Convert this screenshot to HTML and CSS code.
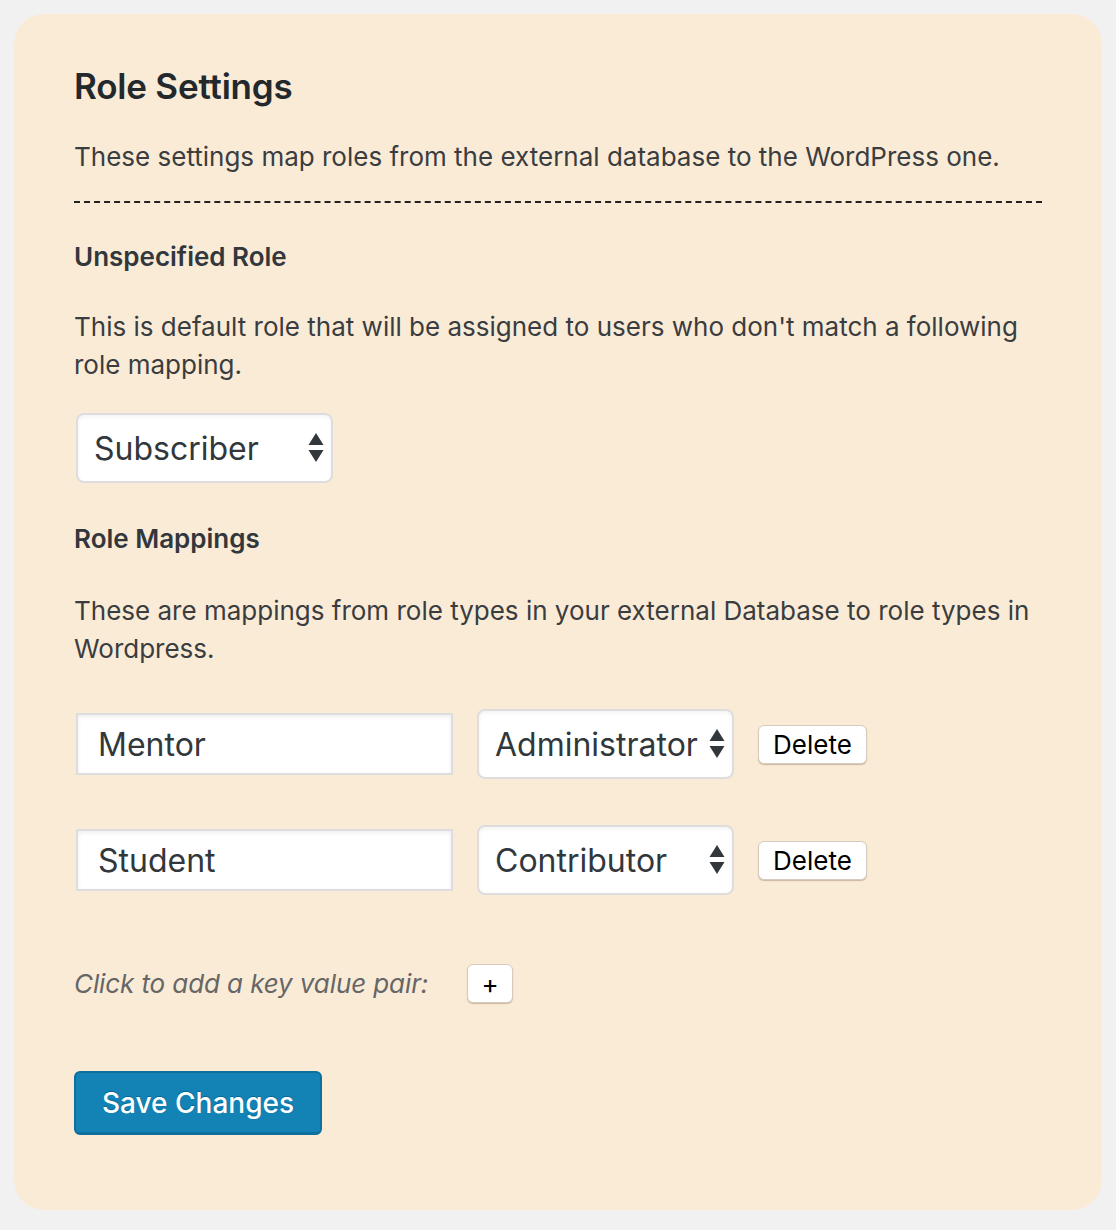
FILE: index.html
```html
<!DOCTYPE html>
<html>
<head>
<meta charset="utf-8">
<link rel="stylesheet" href="styles.css">
</head>
<body>
<div class="card">
  <h2 class="title">Role Settings</h2>
  <p class="desc">These settings map roles from the external database to the WordPress one.</p>
  <hr class="divider">
  <h3 class="sub">Unspecified Role</h3>
  <p class="text">This is default role that will be assigned to users who don't match a following role mapping.</p>
  <div class="select select-first">
    <span class="select-label">Subscriber</span>
    <svg class="arrows" width="16" height="30" viewBox="0 0 16 30"><path d="M8 0 L15.5 12 L0.5 12 Z" fill="#32373c"/><path d="M0.5 17 L15.5 17 L8 29 Z" fill="#32373c"/></svg>
  </div>
  <h3 class="sub sub-mappings">Role Mappings</h3>
  <p class="text text-mappings">These are mappings from role types in your external Database to role types in Wordpress.</p>
  <div class="mapping">
    <div class="input">Mentor</div>
    <div class="select">
      <span class="select-label">Administrator</span>
      <svg class="arrows" width="16" height="30" viewBox="0 0 16 30"><path d="M8 0 L15.5 12 L0.5 12 Z" fill="#32373c"/><path d="M0.5 17 L15.5 17 L8 29 Z" fill="#32373c"/></svg>
    </div>
    <div class="btn">Delete</div>
  </div>
  <div class="mapping mapping-second">
    <div class="input">Student</div>
    <div class="select">
      <span class="select-label">Contributor</span>
      <svg class="arrows" width="16" height="30" viewBox="0 0 16 30"><path d="M8 0 L15.5 12 L0.5 12 Z" fill="#32373c"/><path d="M0.5 17 L15.5 17 L8 29 Z" fill="#32373c"/></svg>
    </div>
    <div class="btn">Delete</div>
  </div>
  <div class="add-row">
    <span class="add-label">Click to add a key value pair:</span>
    <div class="btn btn-plus">+</div>
  </div>
  <div class="save">Save Changes</div>
</div>
</body>
</html>
```

FILE: styles.css
```css
html, body {
  margin: 0;
  padding: 0;
  background: #f1f1f1;
}
body {
  padding: 14px;
  font-family: Inter, "Noto Sans", sans-serif;
  color: #444;
}
.card {
  background: #faebd7;
  border-radius: 30px;
  padding: 52px 60px 75px 60px;
  height: 1196px;
  box-sizing: border-box;
}
.title {
  margin: 0;
  font-size: 35px;
  line-height: 40px;
  font-weight: 600;
  color: #23282d;
  letter-spacing: -0.2px;
}
.desc {
  margin: 32px 0 0;
  font-size: 26px;
  line-height: 38px;
  color: #3a3d40;
}
.divider {
  margin: 25px 0 0;
  border: 0;
  border-top: 2px dashed #222;
  height: 0;
}
.sub {
  margin: 35px 0 0;
  font-size: 26px;
  line-height: 38px;
  font-weight: 600;
  color: #32373c;
}
.sub-mappings {
  margin-top: 37px;
}
.text {
  margin: 32px 0 0;
  font-size: 26px;
  line-height: 38px;
  color: #3a3d40;
}
.text-mappings {
  margin-top: 34px;
}
.select {
  box-sizing: border-box;
  width: 257px;
  height: 70px;
  border: 2px solid #ddd;
  border-radius: 8px;
  background: #fff;
  box-shadow: inset 0 2px 4px rgba(0,0,0,0.05);
  display: flex;
  align-items: center;
  justify-content: space-between;
  padding: 0 7px 0 16px;
  font-size: 32px;
  color: #32373c;
}
.select-first {
  margin-top: 29px;
  margin-left: 2px;
}
.select-label {
  white-space: nowrap;
}
.arrows {
  flex: none;
}
.mapping {
  margin-top: 41px;
  display: flex;
  align-items: center;
  gap: 24px;
  padding-left: 2px;
}
.mapping-second {
  margin-top: 46px;
}
.input {
  box-sizing: border-box;
  width: 377px;
  height: 62px;
  border: 2px solid #ddd;
  background: #fff;
  box-shadow: inset 0 2px 4px rgba(0,0,0,0.07);
  padding: 0 20px;
  display: flex;
  align-items: center;
  font-size: 32px;
  color: #32373c;
}
.btn {
  box-sizing: border-box;
  height: 39px;
  padding: 0 14px;
  background: #fff;
  border: 1px solid #d6ccbd;
  border-radius: 6px;
  box-shadow: 0 1px 1px rgba(120,90,50,0.35);
  display: flex;
  align-items: center;
  justify-content: center;
  font-size: 26px;
  color: #000;
  margin-left: 0;
}
.add-row {
  margin-top: 69px;
  display: flex;
  align-items: center;
}
.add-label {
  font-style: italic;
  font-size: 26px;
  line-height: 38px;
  color: #666;
  width: 393px;
  letter-spacing: -0.1px;
}
.btn-plus {
  width: 46px;
  padding: 0;
  margin: 0;
  font-size: 26px;
}
.save {
  margin-top: 68px;
  box-sizing: border-box;
  width: 248px;
  height: 64px;
  margin-left: 0;
  background: #1383b5;
  border: 2px solid #0e6f9c;
  border-bottom-width: 3px;
  border-radius: 6px;
  color: #fff;
  font-size: 28px;
  font-weight: 500;
  display: flex;
  align-items: center;
  justify-content: center;
  text-shadow: 0 -1px 1px #006799;
}
```
